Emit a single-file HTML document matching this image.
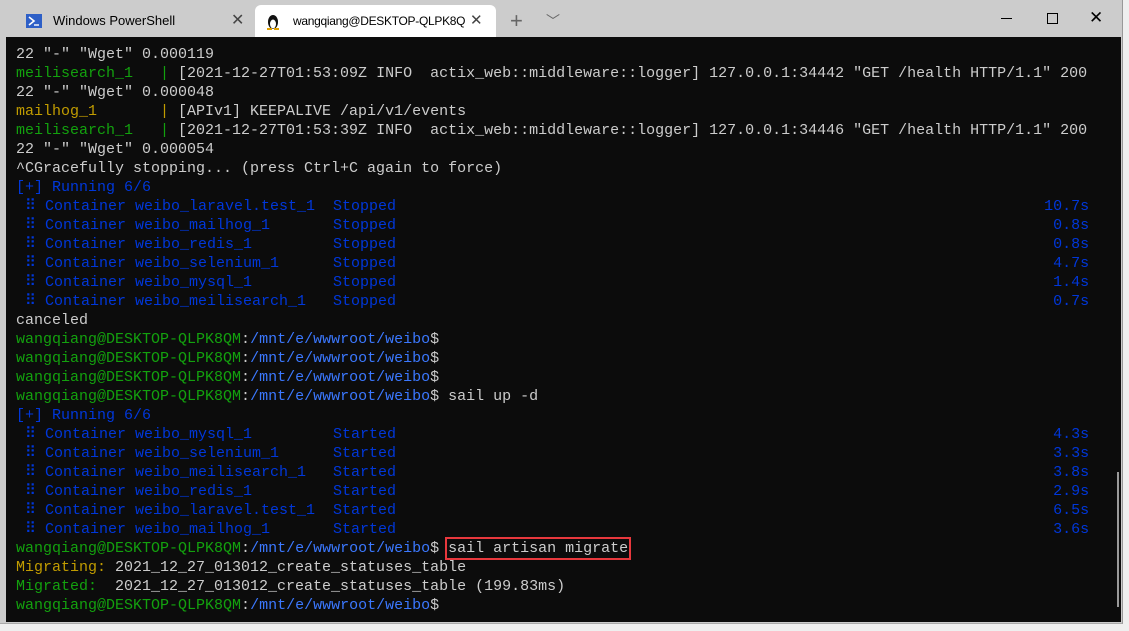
<!DOCTYPE html>
<html><head><meta charset="utf-8"><style>
body{margin:0;width:1129px;height:631px;background:#efefef;overflow:hidden;position:relative;font-family:"Liberation Sans",sans-serif}
#win{position:absolute;left:0;top:0;width:1122px;height:623px;background:#cccccc;border-right:1px solid #999;border-bottom:1px solid #aaa}
#term{position:absolute;left:6px;top:37px;width:1115px;height:585px;background:#0c0c0c}
.tab{position:absolute;top:5px;height:32px;font-size:13px;color:#000;line-height:32px}
#t2{left:255px;width:241px;background:#fff;border-radius:6px 6px 0 0}
pre{position:absolute;left:16px;top:45px;margin:0;font-family:"Liberation Mono",monospace;font-size:15px;line-height:19px;color:#cccccc;white-space:pre}
.g{color:#13a10e}.y{color:#c19c00}.b{color:#0037da}.p{color:#3b78ff}
.box{outline:2px solid #e8383d;outline-offset:1px}
#sb{position:absolute;left:1117px;top:472px;width:2px;height:135px;background:#9a9a9a}
</style></head><body>
<div id="win">
<div class="tab" style="left:26px"><svg width="16" height="14" style="position:absolute;left:0;top:9px"><rect width="16" height="14" fill="#2d5fc7"/><path d="M3 3l5 4-5 4" stroke="#fff" stroke-width="1.6" fill="none"/><path d="M8 11h5" stroke="#fff" stroke-width="1.4"/></svg><span style="position:absolute;left:27px;white-space:nowrap">Windows PowerShell</span><span style="position:absolute;left:205px;font-size:16px;color:#444">✕</span></div>
<div class="tab" id="t2"><svg width="14" height="18" style="position:absolute;left:11px;top:7px"><ellipse cx="7" cy="10" rx="5" ry="7" fill="#111"/><ellipse cx="7" cy="12" rx="3" ry="4.5" fill="#fff"/><path d="M1 17h5M8 17h5" stroke="#e0a000" stroke-width="2"/></svg><span style="position:absolute;left:38px;white-space:nowrap;font-size:12px;letter-spacing:-0.3px">wangqiang@DESKTOP-QLPK8Q</span><span style="position:absolute;left:215px;font-size:15px;color:#444">✕</span></div>
<div class="tab" style="left:510px;font-size:22px;color:#666">+</div>
<div class="tab" style="left:546px;font-size:14px;color:#666">﹀</div>
<div style="position:absolute;left:1001px;top:18px;width:11px;height:1px;background:#000"></div>
<div style="position:absolute;left:1047px;top:13px;width:9px;height:9px;border:1px solid #000"></div>
<div style="position:absolute;left:1089px;top:8px;font-size:17px;color:#000">✕</div>
<div id="term"></div>
<div id="sb"></div>
</div>
<pre>22 "-" "Wget" 0.000119
<span class="g">meilisearch_1   | </span>[2021-12-27T01:53:09Z INFO  actix_web::middleware::logger] 127.0.0.1:34442 "GET /health HTTP/1.1" 200
22 "-" "Wget" 0.000048
<span class="y">mailhog_1       | </span>[APIv1] KEEPALIVE /api/v1/events
<span class="g">meilisearch_1   | </span>[2021-12-27T01:53:39Z INFO  actix_web::middleware::logger] 127.0.0.1:34446 "GET /health HTTP/1.1" 200
22 "-" "Wget" 0.000054
^CGracefully stopping... (press Ctrl+C again to force)
<span class="b">[+] Running 6/6
 ⠿ Container weibo_laravel.test_1  Stopped                                                                        10.7s
 ⠿ Container weibo_mailhog_1       Stopped                                                                         0.8s
 ⠿ Container weibo_redis_1         Stopped                                                                         0.8s
 ⠿ Container weibo_selenium_1      Stopped                                                                         4.7s
 ⠿ Container weibo_mysql_1         Stopped                                                                         1.4s
 ⠿ Container weibo_meilisearch_1   Stopped                                                                         0.7s</span>
canceled
<span class="g">wangqiang@DESKTOP-QLPK8QM</span>:<span class="p">/mnt/e/wwwroot/weibo</span>$
<span class="g">wangqiang@DESKTOP-QLPK8QM</span>:<span class="p">/mnt/e/wwwroot/weibo</span>$
<span class="g">wangqiang@DESKTOP-QLPK8QM</span>:<span class="p">/mnt/e/wwwroot/weibo</span>$
<span class="g">wangqiang@DESKTOP-QLPK8QM</span>:<span class="p">/mnt/e/wwwroot/weibo</span>$ sail up -d
<span class="b">[+] Running 6/6
 ⠿ Container weibo_mysql_1         Started                                                                         4.3s
 ⠿ Container weibo_selenium_1      Started                                                                         3.3s
 ⠿ Container weibo_meilisearch_1   Started                                                                         3.8s
 ⠿ Container weibo_redis_1         Started                                                                         2.9s
 ⠿ Container weibo_laravel.test_1  Started                                                                         6.5s
 ⠿ Container weibo_mailhog_1       Started                                                                         3.6s</span>
<span class="g">wangqiang@DESKTOP-QLPK8QM</span>:<span class="p">/mnt/e/wwwroot/weibo</span>$ <span class="box">sail artisan migrate</span>
<span class="y">Migrating:</span> 2021_12_27_013012_create_statuses_table
<span class="g">Migrated:</span>  2021_12_27_013012_create_statuses_table (199.83ms)
<span class="g">wangqiang@DESKTOP-QLPK8QM</span>:<span class="p">/mnt/e/wwwroot/weibo</span>$</pre>
</body></html>
